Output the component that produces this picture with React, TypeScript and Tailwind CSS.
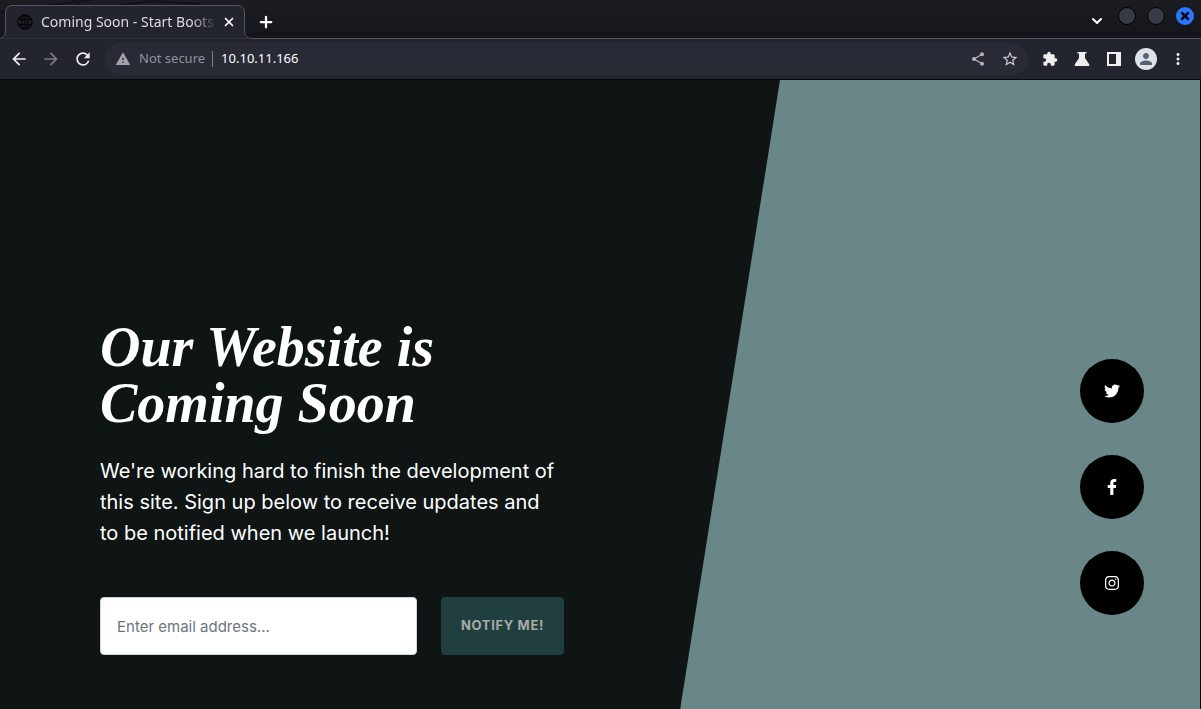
import type { ReactNode } from "react";
import { MdArrowBack, MdArrowForward, MdRefresh, MdWarning, MdShare, MdStarBorder, MdExtension, MdPerson, MdMoreVert } from "react-icons/md";
import { FaTwitter, FaFacebookF, FaInstagram } from "react-icons/fa";
import { ChevronDown, Plus, X } from "lucide-react";

function IconButton({ label, children }: { label: string; children: ReactNode }) {
  return (
    <button type="button" aria-label={label} className="flex size-8 items-center justify-center">
      {children}
    </button>
  );
}

function TabBar() {
  return (
    <header className="relative flex h-[39px] items-center justify-between border-b border-[#55575e] bg-linear-to-b from-[#1c1d23] to-[#15161b]">
      <svg className="absolute top-0 left-0" width="254" height="39" aria-hidden="true">
        <path d="M0 12 L60 4 L90 0 M72 0 L82 6 M118 6 L150 1 L200 4" fill="none" stroke="#111217" strokeWidth="2" />
        <path d="M-2 38.5 Q5.5 38.5 5.5 31 V13 Q5.5 5.5 13 5.5 H237 Q244.5 5.5 244.5 13 V31 Q244.5 38.5 252 38.5 H254" fill="#23252e" stroke="#55575e" />
        <path d="M0 39 H251" stroke="#23252e" strokeWidth="1" />
      </svg>
      <div className="relative flex items-center pt-[6px]">
        <div className="flex w-[245px] items-center pr-2 pl-[17px]">
          <svg className="shrink-0 text-[#050608]" width="16" height="16" viewBox="0 0 16 16" fill="none" stroke="currentColor" strokeWidth="1.3" aria-hidden="true">
            <circle cx="8" cy="8" r="7" />
            <ellipse cx="8" cy="8" rx="3.2" ry="7" />
            <path d="M1.8 5.5h12.4M1.8 10.5h12.4M8 1v14" />
          </svg>
          <span className="ml-2 w-[176px] mask-r-from-85% text-sm whitespace-nowrap text-[#dcdde0]">Coming Soon - Start Boots</span>
          <button type="button" aria-label="Close tab" className="ml-1 flex size-4 items-center justify-center text-white">
            <X className="size-3.5" strokeWidth={3} />
          </button>
        </div>
        <button type="button" aria-label="New tab" className="ml-3 text-white">
          <Plus className="size-[18px]" strokeWidth={3} />
        </button>
      </div>
      <div className="flex items-center gap-3 pr-[7px]">
        <button type="button" aria-label="Search tabs" className="pt-1 pr-px text-white">
          <ChevronDown className="size-4" strokeWidth={3} />
        </button>
        <div className="mb-[7px] flex gap-[11px]">
          <button type="button" aria-label="Minimize" className="size-[18px] rounded-full border border-black bg-[#363b47]" />
          <button type="button" aria-label="Maximize" className="size-[18px] rounded-full border border-black bg-[#363b47]" />
          <button type="button" aria-label="Close window" className="flex size-[18px] items-center justify-center rounded-full bg-[#2777ff] text-[#080d18]">
            <X className="size-3" strokeWidth={5} />
          </button>
        </div>
      </div>
    </header>
  );
}

function Toolbar() {
  return (
    <div className="flex h-[41px] items-center border-b border-[#08090c] bg-[#23252e] pr-[7px] pl-[3px] text-[#eeeeee]">
      <IconButton label="Back"><MdArrowBack className="size-5 stroke-current" /></IconButton>
      <IconButton label="Forward"><MdArrowForward className="size-5 text-[#7b7c81]" /></IconButton>
      <IconButton label="Reload"><MdRefresh className="size-5" /></IconButton>
      <div className="ml-1.5 flex h-8 flex-1 items-center rounded-full bg-[#282a35] pr-0.5 pl-2.5 text-[13px]">
        <MdWarning className="size-4 text-[#a0a2a8]" />
        <span className="ml-2 text-[#8f939b]">Not secure</span>
        <span className="mr-2 ml-[7px] h-4 w-px bg-[#7d7f86]" />
        <input aria-label="Address" defaultValue="10.10.11.166" className="min-w-0 flex-1 bg-transparent text-white outline-none" />
        <IconButton label="Share"><MdShare className="size-4 text-[#b6b7bb]" /></IconButton>
        <IconButton label="Bookmark"><MdStarBorder className="size-[18px] text-[#c9cacd]" /></IconButton>
      </div>
      <div className="ml-1.5 flex">
        <IconButton label="Extensions"><MdExtension className="size-4" /></IconButton>
        <IconButton label="Labs">
          <svg width="16" height="16" viewBox="0 0 16 16" fill="currentColor" aria-hidden="true">
            <path d="M3.5 1h9v1.6h-1.5V7l4 6q1 2-1 2H2q-2 0-1-2l4-6V2.600H3.500z" />
          </svg>
        </IconButton>
        <IconButton label="Side panel">
          <svg width="14" height="14" viewBox="0 0 14 14" fill="currentColor" aria-hidden="true">
            <path fillRule="evenodd" d="M0 0h14v14H0zM2 2v10h7V2z" />
          </svg>
        </IconButton>
        <IconButton label="Profile">
          <span className="flex size-[22px] items-center justify-center rounded-full bg-[#dee1e6] text-[#566174]">
            <MdPerson className="size-[18px]" />
          </span>
        </IconButton>
        <IconButton label="Menu"><MdMoreVert className="size-[18px]" /></IconButton>
      </div>
    </div>
  );
}

const socials = [
  { name: "Twitter", icon: <FaTwitter /> },
  { name: "Facebook", icon: <FaFacebookF /> },
  { name: "Instagram", icon: <FaInstagram /> },
];

export default function App() {
  return (
    <div className="flex min-h-screen flex-col font-['Noto_Sans',sans-serif]">
      <TabBar />
      <Toolbar />
      <main className="flex flex-1 border-r border-[#08090c] bg-[#6a8787] font-[Inter,sans-serif] text-white">
        <section className="flex w-[65%] items-center bg-[#0f1515] pt-[185px] pl-[100px] [clip-path:polygon(0_0,100%_0,87.2%_100%,0_100%)]">
          <div className="w-[464px]">
            <h1 className="mb-[25px] font-['Liberation_Serif',serif] text-[56px] leading-[56px] font-bold italic">Our Website is Coming Soon</h1>
            <p className="mb-12 pr-1 text-xl leading-[31px]">We're working hard to finish the development of this site. Sign up below to receive updates and to be notified when we launch!</p>
            <form className="flex gap-6" onSubmit={(e) => e.preventDefault()}>
              <input type="email" aria-label="Email address" placeholder="Enter email address..." className="h-[58px] min-w-0 flex-1 rounded border border-[#ced4da] bg-white px-4 text-[15px] text-[#212529] placeholder:text-[#6c757d]" />
              <button type="submit" className="h-[58px] w-[123px] rounded bg-[#213e3e] text-[13px] font-bold tracking-wider text-[#a8aba8]">NOTIFY ME!</button>
            </form>
          </div>
        </section>
        <nav aria-label="Social links" className="flex flex-1 flex-col items-end justify-center gap-8 pt-[185px] pr-14">
          {socials.map((s) => (
            <a key={s.name} href="#" aria-label={s.name} className="flex size-16 items-center justify-center rounded-full bg-black text-base">
              {s.icon}
            </a>
          ))}
        </nav>
      </main>
    </div>
  );
}
